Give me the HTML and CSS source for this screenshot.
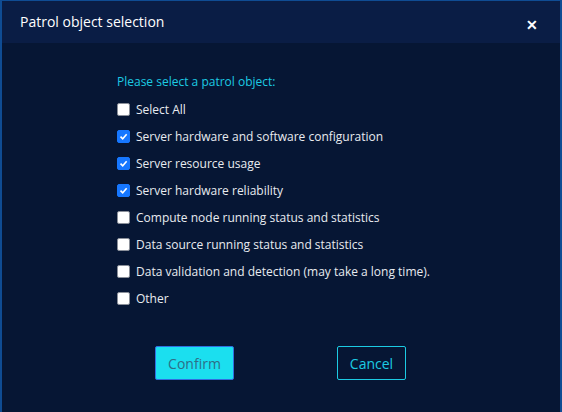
FILE: index.html
```html
<!DOCTYPE html>
<html>
<head>
<meta charset="utf-8">
<link rel="stylesheet" href="styles.css">
</head>
<body>
<div class="dialog">
  <div class="header">
    <span class="title">Patrol object selection</span>
    <span class="close">&#x2715;</span>
  </div>
  <div class="body">
    <div class="prompt">Please select a patrol object:</div>
    <ul class="list">
      <li><span class="box"></span>Select All</li>
      <li><span class="box on"><svg viewBox="0 0 14 14" width="14" height="14"><path d="M3.2 7.2 L6 10 L11 4.2" fill="none" stroke="#fff" stroke-width="2"/></svg></span>Server hardware and software configuration</li>
      <li><span class="box on"><svg viewBox="0 0 14 14" width="14" height="14"><path d="M3.2 7.2 L6 10 L11 4.2" fill="none" stroke="#fff" stroke-width="2"/></svg></span>Server resource usage</li>
      <li><span class="box on"><svg viewBox="0 0 14 14" width="14" height="14"><path d="M3.2 7.2 L6 10 L11 4.2" fill="none" stroke="#fff" stroke-width="2"/></svg></span>Server hardware reliability</li>
      <li><span class="box"></span>Compute node running status and statistics</li>
      <li><span class="box"></span>Data source running status and statistics</li>
      <li><span class="box"></span>Data validation and detection (may take a long time).</li>
      <li><span class="box"></span>Other</li>
    </ul>
    <div class="actions">
      <button class="btn confirm">Confirm</button>
      <button class="btn cancel">Cancel</button>
    </div>
  </div>
</div>
</body>
</html>
```
FILE: styles.css
```css
html, body {
  margin: 0;
  padding: 0;
  background: #061634;
}
.dialog {
  width: 562px;
  height: 412px;
  box-sizing: border-box;
  border-left: 2px solid #0f4c93;
  border-right: 2px solid #0f4c93;
  border-top: 1px solid #0f4c93;
  background: #061634;
  font-family: "Open Sans", "Noto Sans", sans-serif;
  display: flex;
  flex-direction: column;
}
.header {
  height: 42px;
  background: #0a1d45;
  display: flex;
  align-items: center;
  justify-content: space-between;
  padding: 0 22px 0 18px;
  flex: none;
}
.title {
  color: #ffffff;
  font-size: 14px;
  margin-top: -1px;
}
.close {
  color: #ffffff;
  font-size: 14px;
  font-weight: bold;
  margin-top: 4px;
}
.body {
  flex: 1;
  padding: 30px 0 0 115px;
  background: #061634;
}
.prompt {
  color: #1ccbe3;
  font-size: 12px;
  line-height: 18px;
  margin-bottom: 5px;
}
.list {
  list-style: none;
  margin: 0;
  padding: 0;
}
.list li {
  display: flex;
  align-items: center;
  height: 27px;
  color: #e8ebf0;
  font-size: 12px;
}
.box {
  width: 13px;
  height: 13px;
  box-sizing: border-box;
  background: #ffffff;
  border: 1px solid #8a8f99;
  border-radius: 2px;
  margin: 0 6px 0 0;
  display: flex;
  align-items: center;
  justify-content: center;
  flex: none;
}
.box.on {
  background: #1677ff;
  border-color: #1677ff;
}
.box svg {
  width: 11px;
  height: 11px;
}
.actions {
  display: flex;
  gap: 103px;
  margin-top: 34px;
  padding-left: 38px;
}
.btn {
  height: 34px;
  font-family: "Open Sans", "Noto Sans", sans-serif;
  font-size: 14px;
  border-radius: 2px;
  padding: 0;
}
.confirm {
  width: 79px;
  background: #1bdfef;
  color: #2e6e87;
  border: 1px solid #2f6fe0;
}
.cancel {
  width: 69px;
  background: transparent;
  color: #1ccbe3;
  border: 1px solid #1ccbe3;
}
```
